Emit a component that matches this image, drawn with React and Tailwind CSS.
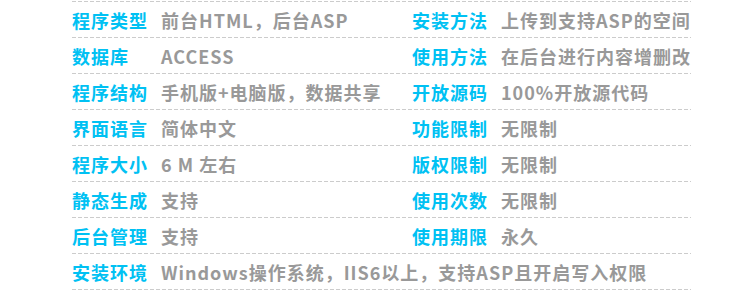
import React from 'react';

const rows = [
  [['程序类型', '前台HTML，后台ASP'], ['安装方法', '上传到支持ASP的空间']],
  [['数据库', 'ACCESS'], ['使用方法', '在后台进行内容增删改']],
  [['程序结构', '手机版+电脑版，数据共享'], ['开放源码', '100%开放源代码']],
  [['界面语言', '简体中文'], ['功能限制', '无限制']],
  [['程序大小', '6 M 左右'], ['版权限制', '无限制']],
  [['静态生成', '支持'], ['使用次数', '无限制']],
  [['后台管理', '支持'], ['使用期限', '永久']],
  [['安装环境', 'Windows操作系统，IIS6以上，支持ASP且开启写入权限']],
];

const Dash = () => (
  <div className="h-px bg-[repeating-linear-gradient(90deg,#cccccc_0,#cccccc_4px,transparent_4px,transparent_6px)]" />
);

const Cell = ({ label, value, wide }) => (
  <div className={`flex items-center ${wide ? 'flex-1' : 'w-[340px]'}`}>
    <span className="w-[89px] shrink-0 text-[#00c1f3]">{label}</span>
    <span className="text-[#999999] whitespace-nowrap">{value}</span>
  </div>
);

export default function App() {
  return (
    <div className="w-[750px] h-[296px] bg-white pl-[72px] pt-px font-['Noto_Sans_CJK_SC','Noto_Sans',sans-serif] text-[18px] font-bold tracking-[1px]">
      <div className="w-[619px]">
        <Dash />
        {rows.map((row, i) => (
          <div key={i}>
            <div className="flex h-[35px] items-center leading-none">
              {row.length === 1 ? (
                <Cell label={row[0][0]} value={row[0][1]} wide />
              ) : (
                <>
                  <Cell label={row[0][0]} value={row[0][1]} />
                  <Cell label={row[1][0]} value={row[1][1]} wide />
                </>
              )}
            </div>
            <Dash />
          </div>
        ))}
      </div>
    </div>
  );
}
